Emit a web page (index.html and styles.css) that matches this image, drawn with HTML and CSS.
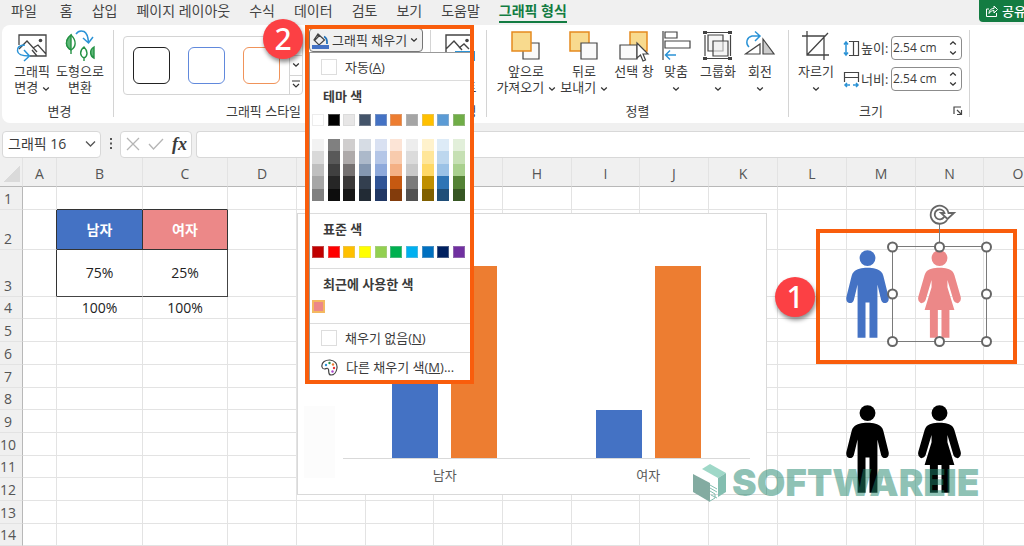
FILE: index.html
```html
<!DOCTYPE html>
<html lang="ko">
<head>
<meta charset="utf-8">
<title>그래픽 형식</title>
<link rel="stylesheet" href="styles.css">
</head>
<body>
<svg class="defs" aria-hidden="true">
  <symbol id="chev" viewBox="0 0 8 6"><path d="M1.2 1.5 4 4.2 6.8 1.5" fill="none" stroke="currentColor" stroke-width="1.3"/></symbol>
  <symbol id="man" viewBox="0 0 130 265">
    <circle cx="65" cy="24" r="24"/>
    <path d="M65 53C83 53 98 57 106 65Q111 69 113 78L129 142Q131 157 120 160Q109 161 106 150L95 104V265H71V158H59V265H35V104L24 150Q21 161 10 160Q-1 157 1 142L17 78Q19 69 24 65C32 57 47 53 65 53Z"/>
  </symbol>
  <symbol id="woman" viewBox="0 0 130 265">
    <circle cx="65" cy="24" r="24"/>
    <path d="M65 53C83 53 98 57 105 65Q108 69 110 75L129 141Q132 155 122 160Q111 161 107 151L89 90V112L110 181H95V265H71V181H60V265H36V181H20L41 112V90L23 151Q19 161 8 160Q-2 155 1 141L20 75Q22 69 25 65C32 57 47 53 65 53Z"/>
  </symbol>
</svg>

<nav class="tabs">
  <a class="file" href="#">파일</a><a href="#">홈</a><a href="#">삽입</a><a href="#">페이지 레이아웃</a><a href="#">수식</a><a href="#">데이터</a><a href="#">검토</a><a href="#">보기</a><a href="#">도움말</a><a class="active" href="#">그래픽 형식</a>
  <button class="share"><svg width="14" height="14" viewBox="0 0 14 14" fill="none" stroke="#fff"><path d="M4 5H1.5V12.5H11.5V9M4 9.5C4 6 6 4.500 9 4.500V2L12.500 5.500 9 9V6.500C7 6.500 5 7.500 4 9.500Z"/></svg>공유</button>
</nav>

<div class="ribbon">
  <section class="group g-change">
    <div class="tools">
      <button class="tool"><svg width="32" height="32" viewBox="0 0 32 32" fill="none" stroke="#444" stroke-width="1.300"><path d="M3 15V5H30V26H14M3 19 11 11 21 22M17 18 22 15 30 24M21 26 16 20"/><circle cx="24.500" cy="10.500" r="1.800" fill="#444" stroke="none"/><path d="M9 15C3 15 1 18 1.500 21 2 25 6 26 13 26M8 20 13.500 26 8 31" stroke="#2b93d6" stroke-width="1.500"/></svg><span>그래픽<br>변경 <svg class="chev"><use href="#chev"/></svg></span></button>
      <button class="tool"><svg width="32" height="32" viewBox="0 0 32 32"><g stroke="#259245" stroke-width="1.400" fill="#5fb878"><path d="M7 5C0 11 2 17 7 20C12 17 13 11 7 5Z" fill="#fff"/><path d="M7 5C0 11 2 17 7 20ZM7 20V24" /><path d="M20 17C15 21 16 26 20 28C24 26 24 21 20 17ZM20 28V31" fill="#fff"/><path d="M30 17C25 20 26 26 30 28Z"/></g><path d="M12 4C14 1 17 .5 20 1.500 23 3 24 7 24.500 12M19 8 24.500 13 29 7" fill="none" stroke="#2b93d6" stroke-width="1.500"/></svg><span>도형으로<br>변환</span></button>
    </div>
    <div class="caption">변경</div>
  </section>

  <section class="group g-style">
    <div class="tools">
      <div class="gallery">
        <button class="look black" aria-label="검정"></button><button class="look blue" aria-label="파랑"></button><button class="look orange" aria-label="주황"></button>
        <div class="scroller">
          <button aria-label="위로"></button>
          <button aria-label="아래로"><svg class="chev"><use href="#chev"/></svg></button>
          <button aria-label="자세히"><svg width="10" height="9" viewBox="0 0 10 9" fill="none" stroke="#333" stroke-width="1.200"><path d="M1 1H9M2 4 5 7 8 4"/></svg></button>
        </div>
      </div>
      <div class="fill">
        <button class="fill-button"><svg width="17" height="17" viewBox="0 0 17 17"><path d="M6 2 12.500 8 7 13 2 8ZM6 2V6M3 8 8 3" fill="none" stroke="#444" stroke-width="1.200"/><path d="M12 4.500Q15.500 6 15 12" fill="none" stroke="#1e6fb8" stroke-width="1.800"/><path d="M0 13H17V17H0Z" fill="#4472c4"/></svg>그래픽 채우기 <svg class="chev"><use href="#chev"/></svg></button>
        <div class="menu">
          <button class="item auto"><i class="empty"></i><span>자동(<u>A</u>)</span></button>
          <h3>테마 색</h3>
          <div class="swatches" data-colors="ffffff 000000 e7e6e6 44546a 4472c4 ed7d31 a5a5a5 ffc000 5b9bd5 70ad47"></div>
          <div class="swatches shades" data-colors="f2f2f2,d9d9d9,bfbfbf,a6a6a6,808080 808080,595959,404040,262626,0d0d0d d0cece,aeaaaa,757171,3a3838,161616 d6dce4,acb9ca,8497b0,333f4f,222b35 d9e1f2,b4c6e7,8ea9db,305496,203764 fce4d6,f8cbad,f4b084,c65911,833c0c ededed,dbdbdb,c9c9c9,7b7b7b,525252 fff2cc,ffe699,ffd966,bf8f00,806000 ddebf7,bdd7ee,9bc2e6,2f75b5,1f4e78 e2efda,c6e0b4,a9d08e,548235,375623"></div>
          <h3 class="ruled">표준 색</h3>
          <div class="swatches" data-colors="c00000 ff0000 ffc000 ffff00 92d050 00b050 00b0f0 0070c0 002060 7030a0"></div>
          <h3 class="ruled recent-title">최근에 사용한 색</h3>
          <button class="recent" aria-label="분홍"></button>
          <button class="item ruled"><i class="empty"></i><span>채우기 없음(<u>N</u>)</span></button>
          <button class="item ruled more"><svg width="17" height="17" viewBox="0 0 17 17"><path d="M1 8C0 3 5 .8 9 1 14 1.500 16.500 5 16 9 15.500 13 13 16 10 16 7 16 8 12.500 7.500 10.500 6.500 8 5 10 3.500 10 2 10 1.200 9 1 8Z" fill="#fff" stroke="#444" stroke-width="1.200"/><g><circle cx="5" cy="6" r="1.200" fill="#2b93d6"/><circle cx="8.500" cy="4" r="1.200" fill="#259245"/><circle cx="12" cy="5.500" r="1.200" fill="#ed7d31"/><circle cx="13" cy="9" r="1.200" fill="#e33"/><circle cx="11.500" cy="12.500" r="1.200" fill="#a4c"/></g></svg><span>다른 채우기 색(<u>M</u>)...</span></button>
        </div>
        <div class="frame"></div>
        <div class="badge two">2</div>
      </div>
    </div>
    <div class="caption">그래픽 스타일</div>
  </section>

  <section class="group g-alt">
    <div class="tools"><button class="tool"><svg width="32" height="32" viewBox="0 0 32 32" fill="none" stroke="#444" stroke-width="1.400"><path d="M3 26V5H30V20M3 19 11 11 19 20M16 18 21 14 26 19"/><circle cx="24" cy="10.500" r="1.800" fill="#444" stroke="none"/><path d="M12 21H32V31H12Z" fill="#2b93d6" stroke="none"/></svg><span>대체<br>텍스트</span></button></div>
    <div class="caption">접근성</div>
  </section>

  <section class="group g-arrange">
    <div class="tools">
      <button class="tool"><svg width="32" height="32" viewBox="0 0 32 32"><path d="M13 13H29V29H13Z" fill="#fafafa" stroke="#444" stroke-width="1.200"/><path d="M2 2H21V21H2Z" fill="#f8da8e" stroke="#e58a1f" stroke-width="1.500"/></svg><span>앞으로<br>가져오기 <svg class="chev"><use href="#chev"/></svg></span></button>
      <button class="tool"><svg width="32" height="32" viewBox="0 0 32 32"><path d="M2 2H21V21H2Z" fill="#f8da8e" stroke="#e58a1f" stroke-width="1.500"/><path d="M13 13H29V29H13Z" fill="#fafafa" stroke="#444" stroke-width="1.200"/></svg><span>뒤로<br>보내기 <svg class="chev"><use href="#chev"/></svg></span></button>
      <button class="tool narrow"><svg width="32" height="32" viewBox="0 0 32 32"><path d="M12 2H29V21H12Z" fill="#f8da8e" stroke="#e58a1f" stroke-width="1.500"/><path d="M2 15H19V29H2Z" fill="#fafafa" stroke="#444" stroke-width="1.200"/><path d="M19 13V28L22.500 25 25 31 27.500 30 25 24H30Z" fill="#fff" stroke="#444" stroke-width="1.200"/></svg><span>선택 창</span></button>
      <button class="tool narrow"><svg width="32" height="32" viewBox="0 0 32 32" fill="none" stroke="#444" stroke-width="1.200"><path d="M3 1V30M5 2H17V8H5ZM5 11H30V18H5Z"/><path d="M16 25H6M10 20.500 5.500 25 10 29.500" stroke="#2b93d6" stroke-width="1.500"/></svg><span>맞춤<br><svg class="chev"><use href="#chev"/></svg></span></button>
      <button class="tool narrow"><svg width="32" height="32" viewBox="0 0 32 32" fill="none" stroke="#444" stroke-width="1.200"><path d="M5 2.500H26M5 28.500H26M3 5V26M28.500 5V26"/><path d="M6 5H21V21H6Z" fill="#eee" fill-opacity=".6"/><path d="M11 11H26V26H11Z" fill="#eee" fill-opacity=".6"/><path d="M1 1H5V4H1ZM26 1H30V4H26ZM1 27H5V30H1ZM26 27H30V30H26Z" fill="#444" stroke="none"/></svg><span>그룹화<br><svg class="chev"><use href="#chev"/></svg></span></button>
      <button class="tool narrow"><svg width="32" height="32" viewBox="0 0 32 32" fill="none" stroke="#444" stroke-width="1.200"><path d="M19 9 30 24H19Z" fill="#ccc"/><path d="M1.500 24H16V14Z"/><path d="M5 17C1 13 3 7 8 6H15M11 1.500 16 6 11 11" stroke="#2b93d6" stroke-width="1.500"/></svg><span>회전<br><svg class="chev"><use href="#chev"/></svg></span></button>
    </div>
    <div class="caption">정렬</div>
  </section>

  <section class="group g-size">
    <div class="tools">
      <button class="tool"><svg width="32" height="32" viewBox="0 0 32 32" fill="none" stroke="#444" stroke-width="1.300"><path d="M7 1V25H29M2 6H24V30M7 25 28 3"/></svg><span>자르기<br><svg class="chev"><use href="#chev"/></svg></span></button>
      <div class="fields">
        <div class="field"><svg width="17" height="17" viewBox="0 0 17 17" fill="none" stroke="#444" stroke-width="1.200"><path d="M6 1.500H15.500V15.500H6M10.500 2V15"/><path d="M3 2V15M1 4.500 3 2 5 4.500M1 12.500 3 15 5 12.500" stroke="#2b93d6" stroke-width="1.500"/></svg><label for="h">높이:</label><span class="spin"><input id="h" value="2.54 cm"><span class="arrows"><button aria-label="높이 늘리기"><svg class="chev up"><use href="#chev"/></svg></button><button aria-label="높이 줄이기"><svg class="chev"><use href="#chev"/></svg></button></span></span></div>
        <div class="field"><svg width="17" height="17" viewBox="0 0 17 17" fill="none" stroke="#444" stroke-width="1.200"><path d="M1.500 11V1.500H15.500V11M2 6.500H15"/><path d="M2 14H7M10 14H15M4 12 2 14 4 16M13 12 15 14 13 16" stroke="#2b93d6" stroke-width="1.500"/></svg><label for="w">너비:</label><span class="spin"><input id="w" value="2.54 cm"><span class="arrows"><button aria-label="너비 늘리기"><svg class="chev up"><use href="#chev"/></svg></button><button aria-label="너비 줄이기"><svg class="chev"><use href="#chev"/></svg></button></span></span></div>
      </div>
    </div>
    <div class="caption">크기<button class="launcher" aria-label="크기 설정"><svg width="10" height="10" viewBox="0 0 10 10" fill="none" stroke="#444" stroke-width="1.200"><path d="M1 8V1H8M4 4 8.500 8.500M8.500 4V8.500H4"/></svg></button></div>
  </section>
</div>

<div class="formula">
  <button class="name-box">그래픽 16<svg width="11" height="8" viewBox="0 0 11 8" fill="none" stroke="#555" stroke-width="1.300"><path d="M1 1.500 5.500 6 10 1.500"/></svg></button>
  <svg class="dots" width="4" height="12" viewBox="0 0 4 12" fill="#555"><path d="M1 0H3V2H1ZM1 4.500H3V6.500H1ZM1 9H3V11H1Z"/></svg>
  <div class="fx-box">
    <button aria-label="취소"><svg width="14" height="14" viewBox="0 0 14 14" stroke="#b5b5b5" stroke-width="1.300"><path d="M1 1 13 13M13 1 1 13"/></svg></button>
    <button aria-label="입력"><svg width="16" height="14" viewBox="0 0 16 14" fill="none" stroke="#b5b5b5" stroke-width="1.300"><path d="M1 7 5.500 12 15 2"/></svg></button>
    <button class="fx">fx</button>
  </div>
  <input class="formula-input" aria-label="수식 입력줄">
</div>

<main class="sheet">
  <table>
    <colgroup><col class="c-head"><col class="c-a"><col class="c-b"><col class="c-c"><col class="c-n"><col class="c-n"><col class="c-s"><col class="c-n"><col class="c-n"><col class="c-s"><col class="c-n"><col class="c-n"><col class="c-n"><col class="c-n"><col class="c-s"><col></colgroup>
    <thead></thead>
    <tbody></tbody>
  </table>

  <div class="chart">
    <div class="ghost"></div>
    <div class="plot">
      <div class="cat"><i class="bar blue" style="height:75%"></i><i class="bar orange" style="height:100%"></i></div>
      <div class="cat"><i class="bar blue" style="height:25%"></i><i class="bar orange" style="height:100%"></i></div>
    </div>
    <div class="axis"><span>남자</span><span>여자</span></div>
  </div>

  <svg class="person man-top"><use href="#man"/></svg>
  <svg class="person woman-top"><use href="#woman"/></svg>
  <svg class="person man-low"><use href="#man"/></svg>
  <svg class="person woman-low"><use href="#woman"/></svg>
  <div class="frame people"></div>
  <svg class="selection" width="106" height="146" viewBox="0 0 106 146" fill="none" stroke="#666">
    <path d="M5.500 44.500H99.500V139.500H5.500ZM52.500 22V40" stroke="#7a7a7a"/>
    <g fill="#fff" stroke-width="2"><circle cx="5.500" cy="45" r="4.500"/><circle cx="52.500" cy="45" r="4.500"/><circle cx="99.500" cy="45" r="4.500"/><circle cx="5.500" cy="92" r="4.500"/><circle cx="99.500" cy="92" r="4.500"/><circle cx="5.500" cy="139.500" r="4.500"/><circle cx="52.500" cy="139.500" r="4.500"/><circle cx="99.500" cy="139.500" r="4.500"/></g>
    <path d="M60 18A9 9 0 1 1 61.500 11H67L60.500 17 54 11H57.500A5 5 0 1 0 57 15" fill="#fff" stroke-width="1.800"/>
  </svg>
  <div class="badge one">1</div>

  <div class="watermark">
    <svg width="34" height="38" viewBox="0 0 34 38"><path d="M9 5 17 0 33 9 25 14Z" fill="#9fd8c8"/><path d="M25 14 33 9V28L25 33Z" fill="#83beb0"/><path d="M0 10 17 19V38L0 28Z" fill="#83aba1"/><path d="M17 21 24 25M17 24 24 28M17 27 22 30V34L17 37M18 31 24 34" fill="none" stroke="#83beb0"/></svg>
    <span>SOFTWAREIE</span>
  </div>
</main>
<script src="app.js"></script>
</body>
</html>
```

FILE: app.js
```js
// Colour palettes: a space separates columns, a comma separates shades in one column.
document.querySelectorAll('.swatches').forEach(row => {
  row.dataset.colors.split(' ').forEach(column => {
    const strip = document.createElement('div');
    strip.className = 'strip';
    column.split(',').forEach(hex => {
      const b = document.createElement('button');
      b.style.background = '#' + hex;
      b.setAttribute('aria-label', '#' + hex);
      strip.append(b);
    });
    row.append(strip);
  });
});

// Worksheet grid.
const letters = 'ABCDEFGHIJKLMNO'.split('');
const values = {
  B2: ['남자', 'male'], C2: ['여자', 'female'],
  B3: ['75%', 'boxed'], C3: ['25%', 'boxed'],
  B4: ['100%', ''], C4: ['100%', ''],
  A2: ['', 'edge-r'], A3: ['', 'edge-r'], B1: ['', 'edge-b'], C1: ['', 'edge-b']
};
document.querySelector('thead').innerHTML =
  '<tr><th class="corner"></th>' + letters.map(l => `<th>${l}</th>`).join('') + '</tr>';
document.querySelector('tbody').innerHTML = Array.from({ length: 14 }, (_, i) => {
  const n = i + 1;
  return `<tr class="r${n}"><th>${n}</th>` + letters.map(l => {
    const v = values[l + n] || ['', ''];
    return `<td class="${v[1]}">${v[0]}</td>`;
  }).join('') + '</tr>';
}).join('');
```

FILE: styles.css
```css
* { box-sizing: border-box; }
body {
  margin: 0;
  min-height: 100vh;
  overflow: hidden;
  background: #f0f0f0;
  color: #3b3b3b;
  font-family: "Open Sans", "Noto Sans CJK KR", sans-serif;
  font-size: 13px;
  line-height: 16px;
}
button, input { font: inherit; color: inherit; background: none; border: 0; padding: 0; margin: 0; }
.defs { display: none; }
.chev { width: 8px; height: 6px; vertical-align: middle; color: #333; }
.chev.up { transform: rotate(180deg); }

/* Tabs */
.tabs { display: flex; gap: 19px; height: 25px; padding-left: 11px; overflow: hidden; font-size: 14px; line-height: 22px; white-space: nowrap; }
.tabs a { color: #444; text-decoration: none; flex: none; height: 23px; }
.tabs .file { margin-right: 4px; }
.tabs .active { color: #137c42; font-weight: 700; border-bottom: 2px solid #137c42; }
.share { display: flex; align-items: center; gap: 3px; flex: none; width: 45px; height: 22px; margin-left: auto; padding-left: 6px; border-radius: 0 0 0 4px; background: #137c42; color: #fff; font-size: 13px; font-weight: 500; overflow: hidden; }
.share svg { flex: none; }

/* Ribbon */
.ribbon { display: flex; height: 98px; margin-left: 2px; padding: 5px 0 6px; background: #fff; border-radius: 8px 0 0 8px; }
.group { display: flex; flex-direction: column; flex: none; border-right: 1px solid #d4d4d4; }
.tools { display: flex; flex: 1; }
.caption { display: flex; justify-content: center; align-items: center; height: 16px; margin-bottom: -2px; }
.tool { display: flex; flex-direction: column; align-items: center; gap: 1px; width: 58px; height: 66px; white-space: nowrap; }
.tool > svg { flex: none; }
.tool.narrow { width: 42px; }
.g-change { width: 112px; padding-left: 6px; }
.g-change .tool { width: 48px; }
.g-change .caption { padding-right: 2px; }
.g-style { width: 317px; padding-left: 9px; }
.g-style .tools { gap: 6px; }
.g-style .caption { padding-right: 26px; }
.gallery { display: flex; align-items: center; gap: 18px; width: 180px; height: 59px; margin-top: 6px; padding-left: 9px; border: 1px solid #d4d4d4; border-radius: 4px; }
.look { width: 37px; height: 37px; border: 1px solid; border-radius: 6px; flex: none; }
.look.black { border-color: #222; }
.look.blue { border-color: #6189dc; }
.look.orange { border-color: #f0935a; }
.scroller { display: flex; flex-direction: column; flex: 1; height: 57px; margin-left: -9px; border-left: 1px solid #d4d4d4; }
.scroller button { display: flex; align-items: center; justify-content: center; flex: 1; }
.scroller button + button { border-top: 1px solid #d4d4d4; }
.g-alt { width: 56px; }
.g-arrange { width: 302px; padding-left: 10px; }
.g-arrange .caption { padding-right: 10px; }
.g-size { width: 181px; }
.g-size .tool { width: 54px; }
.g-size .caption { display: grid; grid-template-columns: 1fr 16px; text-align: center; }
.launcher { display: flex; }

/* Fill button and menu */
.fill { position: relative; height: 24px; margin-top: -2px; }
.fill-button { display: flex; align-items: center; gap: 3px; width: 114px; height: 24px; padding-left: 2px; border: 1px solid #767676; border-radius: 4px; background: #f0f0f0; white-space: nowrap; }
.menu { position: absolute; z-index: 3; left: 0; top: 24px; width: 162px; height: 329px; border-left: 1px solid #999; border-top: 1px solid #999; background: #fff; }
.menu button { display: block; }
.menu .item { display: flex; align-items: center; gap: 8px; width: 100%; height: 28px; padding-left: 11px; white-space: nowrap; }
.menu .ruled { border-top: 1px solid #dcdcdc; }
.menu .item.ruled { height: 29px; }
.menu .auto { border-bottom: 1px solid #dcdcdc; }
.empty { width: 16px; height: 16px; border: 1px solid #ddd; flex: none; }
.menu h3 { margin: 0; height: 33px; padding-left: 13px; font-size: 13px; line-height: 30px; font-weight: 700; }
.swatches { display: flex; justify-content: space-between; width: 153px; margin-left: 2px; }
.swatches button { width: 12px; height: 12px; box-shadow: inset 0 0 0 1px rgba(200, 200, 200, .35); }
.shades { margin: 13px 0 12px 2px; }
.shades .strip { display: flex; flex-direction: column; height: 62px; }
.shades button { flex: 1; box-shadow: none; }
.menu .recent-title { margin-top: 10px; height: 32px; }
.menu .recent { width: 13px; height: 13px; margin: 0 0 10px 2px; border: 2px solid #f4b860; background: #ec8888; }
.frame { position: absolute; z-index: 4; border: 4px solid #f95d0c; pointer-events: none; }
.fill .frame { left: -4px; top: -3px; width: 169px; height: 359px; }
.badge { position: absolute; z-index: 5; width: 40px; height: 40px; border-radius: 50%; background: #fc4044; color: #fff; font-family: "Noto Sans", sans-serif; font-size: 30px; font-weight: 500; line-height: 40px; text-align: center; box-shadow: 1px 3px 4px rgba(0, 0, 0, .45); }
.badge.two { left: -46px; top: -9px; }

/* Size fields */
.fields { display: flex; flex-direction: column; gap: 7px; padding-top: 6px; }
.field { display: flex; align-items: center; height: 24px; }
.field label { width: 31px; padding-left: 1px; white-space: nowrap; }
.spin { display: flex; width: 71px; height: 24px; border: 1px solid #8c8c8c; border-radius: 4px; }
.spin input { width: 57px; padding-left: 1px; font-size: 12px; }
.arrows { display: flex; flex-direction: column; justify-content: space-evenly; }
.arrows button { display: flex; }

/* Formula bar */
.formula { display: flex; align-items: center; height: 35px; padding: 7px 0 0 2px; }
.name-box, .fx-box, .formula-input { height: 27px; border: 1px solid #d8d8d8; border-radius: 4px; background: #fff; }
.name-box { display: flex; align-items: center; justify-content: space-between; width: 99px; padding: 0 4px 0 5px; font-size: 14px; }
.dots { margin: 0 7px 0 8px; }
.fx-box { display: flex; align-items: center; justify-content: space-between; width: 72px; padding: 0 4px 0 5px; }
.fx-box button { display: flex; }
.fx-box .fx { font: italic 700 18px/20px "Liberation Serif", serif; }
.formula-input { flex: 1; margin-left: 4px; min-width: 0; border-right: 0; border-radius: 4px 0 0 4px; }

/* Worksheet */
.sheet { position: relative; background: #fff; overflow: hidden; }
table { width: 100%; min-width: 1053px; table-layout: fixed; border-spacing: 0; color: #222; font-size: 14px; line-height: 20px; }
.c-head { width: 23px; } .c-a { width: 34px; } .c-b { width: 86px; } .c-c { width: 85px; } .c-n { width: 69px; } .c-s { width: 68px; }
th, td { padding: 0; border: solid #e3e3e3; border-width: 0 1px 1px 0; text-align: center; }
th { background: #f0f0f0; color: #555; font-weight: 400; }
thead th { height: 29px; padding-top: 3px; border-bottom-color: #b8b8b8; }
.corner { background: linear-gradient(135deg, transparent 50%, #dadada 50%) 4px 8px / 16px 16px no-repeat #f0f0f0; }
tbody th { padding-right: 6px; border-right-color: #b8b8b8; vertical-align: bottom; }
tbody tr { height: 23px; }
tbody .r2 { height: 40px; }
tbody .r3 { height: 47px; }
tbody .r4, tbody .r8, tbody .r11, tbody .r14 { height: 22px; }
.male, .female { color: #fff; font-weight: 700; border-color: #333; }
.male { background: #4472c4; }
.female { background: #ec8888; }
.boxed { border-color: #444; }
.boxed:nth-child(3) { border-right-color: #e3e3e3; }
.edge-r { border-right-color: #333; }
.edge-b { border-bottom-color: #333; }

/* Drawing layer */
.chart { position: absolute; left: 297px; top: 55px; width: 470px; height: 282px; padding: 52px 16px 0 45px; border: 1px solid #d9d9d9; background: #fff; color: #595959; }
.ghost { position: absolute; left: 6px; top: 192px; width: 31px; height: 72px; background: #fcfcfc; }
.plot { display: flex; height: 193px; border-bottom: 1px solid #d9d9d9; }
.cat { display: flex; flex: 1; align-items: flex-end; justify-content: center; gap: 13px; }
.bar { width: 46px; }
.bar.blue { background: #4472c4; }
.bar.orange { background: #ed7d31; }
.axis { display: flex; padding-top: 8px; }
.axis span { flex: 1; text-align: center; }
.person { position: absolute; width: 43px; height: 88px; }
.man-top { left: 846px; top: 92px; fill: #4472c4; }
.woman-top { left: 918px; top: 92px; fill: #ec8888; }
.man-low { left: 846px; top: 247px; }
.woman-low { left: 918px; top: 247px; }
.frame.people { left: 816px; top: 71px; width: 201px; height: 135px; }
.selection { position: absolute; z-index: 5; left: 887px; top: 44px; }
.badge.one { left: 775px; top: 119px; }
.watermark { position: absolute; left: 693px; top: 306px; display: flex; align-items: center; gap: 5px; color: rgba(31, 133, 108, .51); font: 900 37px/36px Inter, sans-serif; }
```
